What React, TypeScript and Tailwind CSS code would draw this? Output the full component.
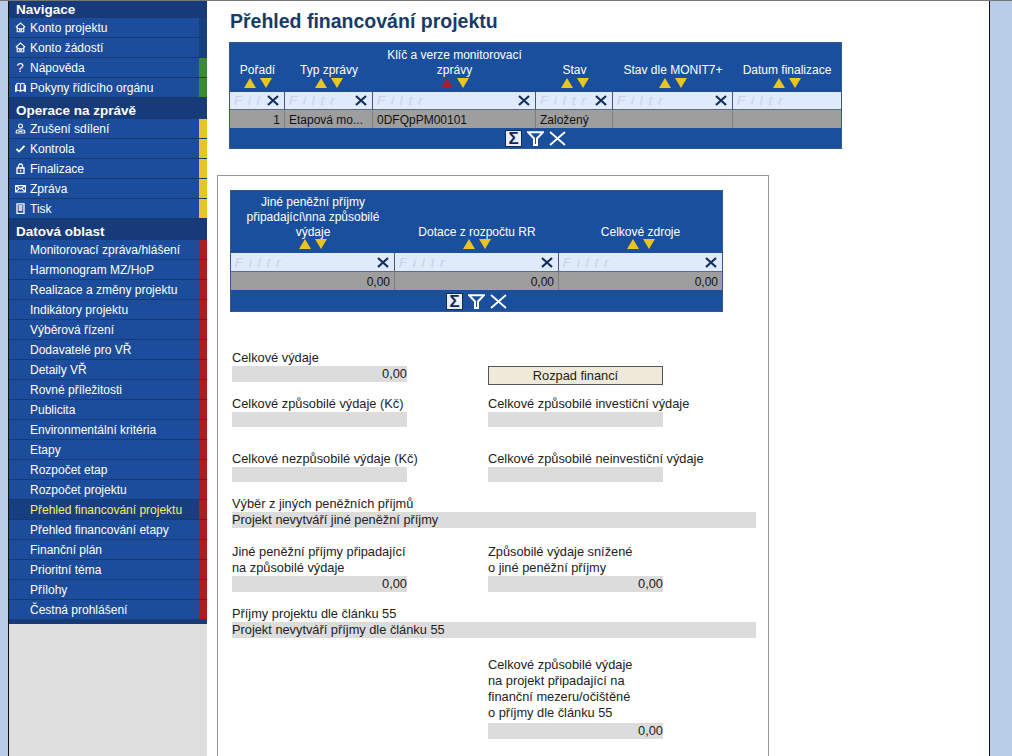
import type { ReactNode } from "react";

const font = "font-['Liberation_Sans',Arial,sans-serif]";

type IconName = "home" | "help" | "book" | "user" | "check" | "lock" | "mail" | "doc";

function NavIcon({ name }: { name: IconName }) {
  const common = { width: 11, height: 11, viewBox: "0 0 11 11", fill: "none", stroke: "#fff", strokeWidth: 1.1 };
  if (name === "help") return <span className="w-[11px] text-center text-[13px] leading-none font-normal text-white">?</span>;
  return (
    <svg {...common}>
      {name === "home" && <path d="M.8 5.2 5.5 1 10.2 5.2M2.2 4.8v5h6.6v-5M2.2 6.8h6.6M4.5 6.8v1.5h2V6.8" />}
      {name === "book" && <path d="M5.5 2.5C4.5 1.2 2.8 1.2 1.8 1.8v7c1-.5 2.7-.5 3.7.5 1-1 2.7-1 3.7-.5v-7c-1-.6-2.7-.6-3.7.7v6.8M.6 3v7M10.4 3v7" />}
      {name === "user" && <path d="M3.5 3a2 2 0 1 1 4 0 2 2 0 1 1-4 0M1.2 10V8.6c0-1 1-1.6 2-1.6h4.6c1 0 2 .6 2 1.6V10zM3.5 8.5h4" />}
      {name === "check" && <path d="M1.5 6 4 8.5 9.5 2.8" strokeWidth={1.8} />}
      {name === "lock" && <path d="M2 5h7v5.5H2zM3.5 5V3a2 2 0 0 1 4 0v2M5.5 6.8v1.8" strokeWidth={1.3} />}
      {name === "mail" && <path d="M.6 2.6h9.8v6.4H.6zM.6 2.6l4.9 3.4 4.9-3.4M.6 9l3.6-3.6M10.4 9 6.8 5.4" />}
      {name === "doc" && <path d="M2 .8h7v9.6H2zM3.6 3h3.8M3.6 5h3.8M3.6 7h3.8" strokeWidth={1.3} />}
    </svg>
  );
}

function NavHeader({ children, h }: { children: ReactNode; h: string }) {
  return <div className={`${h} flex items-end bg-[#173b78] pb-[1px] pl-[7px] text-[13.5px] leading-[14px] font-bold text-white`}>{children}</div>;
}

function NavRow({ label, icon, stripe, active }: { label: string; icon?: IconName; stripe: string; active?: boolean }) {
  return (
    <div className={`flex h-5 items-stretch border-b border-[#16396f] ${active ? "bg-[#173f80] text-[#f2f25a]" : "bg-[#1c4c9c] text-white"}`}>
      <div className="flex flex-1 items-center pl-[4px] text-[12px] leading-none">
        <span className="flex w-[17px] justify-center pr-[3px]">{icon && <NavIcon name={icon} />}</span>
        {label}
      </div>
      <div className={`w-2 ${stripe}`} />
    </div>
  );
}

const dataRows = [
  "Monitorovací zpráva/hlášení",
  "Harmonogram MZ/HoP",
  "Realizace a změny projektu",
  "Indikátory projektu",
  "Výběrová řízení",
  "Dodavatelé pro VŘ",
  "Detaily VŘ",
  "Rovné příležitosti",
  "Publicita",
  "Environmentální kritéria",
  "Etapy",
  "Rozpočet etap",
  "Rozpočet projektu",
  "Přehled financování projektu",
  "Přehled financování etapy",
  "Finanční plán",
  "Prioritní téma",
  "Přílohy",
  "Čestná prohlášení",
];

function Sidebar() {
  return (
    <aside className="flex w-[198px] shrink-0 flex-col bg-[#dedede]">
      <div className="flex flex-col border-b-4 border-[#173b78]">
        <NavHeader h="h-[17px]">Navigace</NavHeader>
        <NavRow label="Konto projektu" icon="home" stripe="bg-[#173f86]" />
        <NavRow label="Konto žádostí" icon="home" stripe="bg-[#173f86]" />
        <NavRow label="Nápověda" icon="help" stripe="bg-[#3a8a2e]" />
        <NavRow label="Pokyny řídícího orgánu" icon="book" stripe="bg-[#3a8a2e]" />
        <NavHeader h="h-[21px]">Operace na zprávě</NavHeader>
        <NavRow label="Zrušení sdílení" icon="user" stripe="bg-[#e8c51f]" />
        <NavRow label="Kontrola" icon="check" stripe="bg-[#e8c51f]" />
        <NavRow label="Finalizace" icon="lock" stripe="bg-[#e8c51f]" />
        <NavRow label="Zpráva" icon="mail" stripe="bg-[#e8c51f]" />
        <NavRow label="Tisk" icon="doc" stripe="bg-[#e8c51f]" />
        <NavHeader h="h-[21px]">Datová oblast</NavHeader>
        {dataRows.map((r) => (
          <NavRow key={r} label={r} stripe="bg-[#b01c1c]" active={r === "Přehled financování projektu"} />
        ))}
      </div>
    </aside>
  );
}

function SortArrows({ active }: { active?: boolean }) {
  return (
    <div className="flex justify-center gap-[4px]">
      <svg width="12" height="10" viewBox="0 0 12 10"><path d="M6 0 12 10H0z" fill={active ? "#a81c2c" : "#e8c51f"} /></svg>
      <svg width="12" height="10" viewBox="0 0 12 10"><path d="M0 0H12L6 10z" fill="#e8c51f" /></svg>
    </div>
  );
}

function ClearX() {
  return (
    <svg width="12" height="11" viewBox="0 0 12 11" className="shrink-0">
      <path d="M1 1 11 10M11 1 1 10" stroke="#12305f" strokeWidth="2.2" />
    </svg>
  );
}

function FooterIcons() {
  return (
    <div className="flex items-center justify-center gap-[5px]">
      <span className="flex h-[17px] w-[17px] items-center justify-center border border-[#0c2a5c] bg-[#e9eef7]">
        <span className="text-[17px] leading-none font-bold text-[#10285a]">Σ</span>
      </span>
      <svg width="17" height="15" viewBox="0 0 17 15"><path d="M1 1.2H16L10 7.5V14H7V7.5z" fill="none" stroke="#fff" strokeWidth="2" /></svg>
      <svg width="17" height="15" viewBox="0 0 17 15"><path d="M1 1 16 14M16 1 1 14" stroke="#fff" strokeWidth="1.8" /></svg>
    </div>
  );
}

type Col = { title: ReactNode; filterX?: boolean; value?: string; right?: boolean; activeSort?: boolean };

function DataTable({ cols, template, headH, filterH, dataH, footH, titleClass = "" }: { cols: Col[]; template: string; headH: string; filterH: string; dataH: string; footH: string; titleClass?: string }) {
  return (
    <div className="flex flex-col border border-[#34588f] bg-[#1a4f9e]">
      <div className={`grid ${template} ${headH}`}>
        {cols.map((c, i) => (
          <div key={i} className="flex flex-col justify-end pb-[4px] text-center text-[12px] leading-[15px] text-white">
            <div className={`px-[8px] ${titleClass}`}>{c.title}</div>
            <SortArrows active={c.activeSort} />
          </div>
        ))}
      </div>
      <div className={`grid ${template} ${filterH} border-b border-[#5c6c84] bg-[#dfeafa]`}>
        {cols.map((c, i) => (
          <div key={i} className="flex items-center justify-between overflow-hidden border-r border-[#44597c] pr-[5px] pl-[4px] last:border-r-0">
            <span className="min-w-0 overflow-hidden text-[13px] leading-none tracking-[6px] text-[#c9d3e4] italic">Filtr</span>
            {c.filterX !== false && <ClearX />}
          </div>
        ))}
      </div>
      <div className={`grid ${template} ${dataH} bg-[#9e9e9e]`}>
        {cols.map((c, i) => (
          <div key={i} className={`flex items-center overflow-hidden border-r border-[#7d7d7d] px-[4px] pt-[1px] text-[12px] leading-none whitespace-nowrap text-[#111] last:border-r-0 ${c.right ? "justify-end" : ""}`}>
            {c.value}
          </div>
        ))}
      </div>
      <div className={`flex ${footH} items-center justify-center pt-[1px]`}>
        <FooterIcons />
      </div>
    </div>
  );
}

function Label({ children }: { children: ReactNode }) {
  return <div className="text-[12.8px] leading-4 text-[#222]">{children}</div>;
}

function ValueBox({ value, wide, h = "h-4" }: { value?: string; wide?: boolean; h?: string }) {
  return (
    <div className={`${h} bg-[#dcdcdc] text-[12.8px] leading-4 text-[#222] ${wide ? "w-[524px]" : "w-[175px] text-right"}`}>
      {value}
    </div>
  );
}

function Field({ label, value, h, gap }: { label: ReactNode; value?: string; h?: string; gap?: string }) {
  return (
    <div className="flex w-[256px] flex-col">
      <Label>{label}</Label>
      <div className={gap}>
        <ValueBox value={value} h={h} />
      </div>
    </div>
  );
}

export default function App() {
  return (
    <div className={`${font} flex h-[756px] w-[1012px] overflow-hidden border-t border-[#777] bg-[#b9cde8]`}>
      <div className="w-2 shrink-0" />
      <div className="flex w-[982px] shrink-0 border-x border-[#111] bg-white">
        <Sidebar />
        <main className="flex min-w-0 flex-1 flex-col pl-[10px]">
          <h1 className="mt-[10px] ml-[13px] h-[31px] text-[19.5px] leading-[20px] font-bold text-[#173b68]">Přehled financování projektu</h1>
          <div className="ml-[12px] w-[613px]">
            <DataTable
              template="grid-cols-[55px_88px_163px_77px_120px_1fr]"
              headH="h-[49px]"
              filterH="h-[18px]"
              dataH="h-[18px]"
              footH="h-[20px]"
              cols={[
                { title: "Pořadí", value: "1", right: true },
                { title: "Typ zprávy", value: "Etapová mo..." },
                { title: "Klíč a verze monitorovací zprávy", value: "0DFQpPM00101", activeSort: true },
                { title: "Stav", value: "Založený" },
                { title: "Stav dle MONIT7+" },
                { title: "Datum finalizace", filterX: false },
              ]}
            />
          </div>
          <section className="mt-[26px] ml-0 flex w-[552px] flex-1 flex-col border border-b-0 border-[#999] pt-[14px] pl-[12px]">
            <div className="w-[493px]">
              <DataTable
                template="grid-cols-[164px_164px_1fr]"
                headH="h-[62px]"
                filterH="h-[19px]"
                dataH="h-[18px]"
                footH="h-[21px]"
                titleClass="-mb-px"
                cols={[
                  { title: "Jiné peněžní příjmy připadající\\nna způsobilé výdaje", value: "0,00", right: true },
                  { title: "Dotace z rozpočtu RR", value: "0,00", right: true },
                  { title: "Celkové zdroje", value: "0,00", right: true },
                ]}
              />
            </div>
            <div className="mt-[38px] flex flex-col pl-[2px]">
              <div className="flex items-start">
                <Field label="Celkové výdaje" value="0,00" />
                <button className="mt-4 h-[19px] w-[175px] border border-[#555] bg-[#efe9d9] pt-[1px] text-[12.8px] leading-none text-[#222]">Rozpad financí</button>
              </div>
              <div className="mt-[11px] flex">
                <Field label="Celkové způsobilé výdaje (Kč)" h="h-[15px]" />
                <Field label="Celkové způsobilé investiční výdaje" h="h-[15px]" />
              </div>
              <div className="mt-[24px] flex">
                <Field label="Celkové nezpůsobilé výdaje (Kč)" h="h-[15px]" />
                <Field label="Celkové způsobilé neinvestiční výdaje" h="h-[15px]" />
              </div>
              <div className="mt-[14px]">
                <Label>Výběr z jiných peněžních příjmů</Label>
                <ValueBox wide value="Projekt nevytváří jiné peněžní příjmy" />
              </div>
              <div className="mt-[16px] flex">
                <Field label={<>Jiné peněžní příjmy připadající<br />na způsobilé výdaje</>} value="0,00" />
                <Field label={<>Způsobilé výdaje snížené<br />o jiné peněžní příjmy</>} value="0,00" />
              </div>
              <div className="mt-[14px]">
                <Label>Příjmy projektu dle článku 55</Label>
                <ValueBox wide value="Projekt nevytváří příjmy dle článku 55" />
              </div>
              <div className="mt-[19px] flex pl-[256px]">
                <Field label={<>Celkové způsobilé výdaje<br />na projekt připadající na<br />finanční mezeru/očištěné<br />o příjmy dle článku 55</>} value="0,00" gap="mt-[2px]" />
              </div>
            </div>
          </section>
        </main>
      </div>
    </div>
  );
}
